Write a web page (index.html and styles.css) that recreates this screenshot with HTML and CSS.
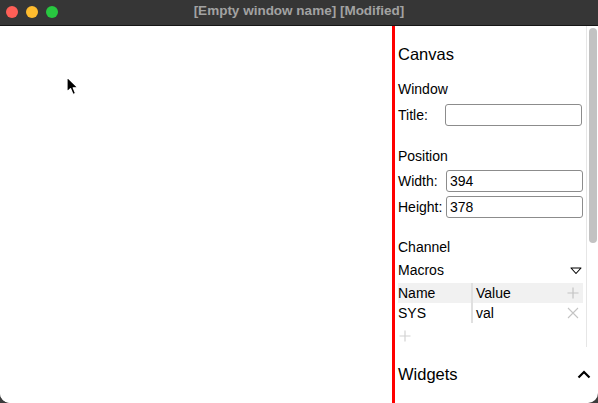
FILE: index.html
```html
<!DOCTYPE html>
<html>
<head>
<meta charset="utf-8">
<link rel="stylesheet" href="styles.css">
</head>
<body>
<div class="window">
  <div class="titlebar">
    <div class="lights">
      <span class="light red"></span>
      <span class="light yellow"></span>
      <span class="light green"></span>
    </div>
    <div class="title">[Empty window name] [Modified]</div>
  </div>
  <div class="main">
    <div class="canvas">
      <svg class="cursor" width="14" height="20" viewBox="0 0 14 20">
        <path d="M1 1 L1 16 L4.5 12.6 L7 18.5 L9.6 17.4 L7.2 11.8 L12 11.8 Z" fill="#000" stroke="#fff" stroke-width="1.2" stroke-linejoin="round"/>
      </svg>
    </div>
    <div class="panel">
      <div class="scroll">
        <div class="content">
          <div class="h-canvas">Canvas</div>
          <div class="group-label g-window">Window</div>
          <div class="form-row r-title">
            <span class="lbl lbl-title">Title:</span>
            <input class="field" type="text" value="">
          </div>
          <div class="group-label g-position">Position</div>
          <div class="form-row r-width">
            <span class="lbl lbl-pos">Width:</span>
            <input class="field" type="text" value="394">
          </div>
          <div class="form-row r-height">
            <span class="lbl lbl-pos">Height:</span>
            <input class="field" type="text" value="378">
          </div>
          <div class="group-label g-channel">Channel</div>
          <div class="macros">
            <span>Macros</span>
            <svg width="12" height="8" viewBox="0 0 12 8"><path d="M1 1 L11 1 L6 6.5 Z" fill="none" stroke="#000" stroke-width="1.1" stroke-linejoin="round"/></svg>
          </div>
          <div class="table">
            <div class="trow thead">
              <div class="cell c-name">Name</div>
              <div class="sep"></div>
              <div class="cell c-val">Value</div>
              <svg class="ico" width="12" height="12" viewBox="0 0 12 12"><path d="M6 0.5 V11.5 M0.5 6 H11.5" stroke="#c4c4c4" stroke-width="1.2"/></svg>
            </div>
            <div class="trow">
              <div class="cell c-name">SYS</div>
              <div class="sep"></div>
              <div class="cell c-val">val</div>
              <svg class="ico" width="12" height="12" viewBox="0 0 12 12"><path d="M1 1 L11 11 M11 1 L1 11" stroke="#c4c4c4" stroke-width="1.1"/></svg>
            </div>
          </div>
          <div class="addrow">
            <svg width="12" height="12" viewBox="0 0 12 12"><path d="M6 0.5 V11.5 M0.5 6 H11.5" stroke="#d2d2d2" stroke-width="1.2"/></svg>
          </div>
        </div>
        <div class="track"><div class="thumb"></div></div>
      </div>
      <div class="widgets">
        <span>Widgets</span>
        <svg width="14" height="9" viewBox="0 0 14 9"><path d="M1.5 7.5 L7 2 L12.5 7.5" fill="none" stroke="#000" stroke-width="2.2"/></svg>
      </div>
    </div>
  </div>
</div>
</body>
</html>
```
FILE: styles.css
```css
html, body {
  margin: 0;
  padding: 0;
  background: #3c3c3c;
}
body {
  width: 598px;
  height: 403px;
  overflow: hidden;
  font-family: "Liberation Sans", Arial, sans-serif;
  color: #000;
}
.window {
  width: 598px;
  height: 403px;
  border-radius: 0 0 10px 10px;
  overflow: hidden;
  background: #fff;
  display: flex;
  flex-direction: column;
}
.titlebar {
  height: 25px;
  flex: none;
  background: #363636;
  border-bottom: 1px solid #161616;
  display: flex;
  align-items: center;
  position: relative;
}
.lights {
  display: flex;
  gap: 8px;
  padding-left: 6px;
  margin-top: -1px;
}
.light {
  width: 12px;
  height: 12px;
  border-radius: 50%;
  display: block;
}
.red { background: #fe5f57; }
.yellow { background: #febc2e; }
.green { background: #28c840; }
.title {
  position: absolute;
  left: 0;
  right: 0;
  top: 3px;
  text-align: center;
  font-weight: bold;
  font-size: 13.5px;
  color: #a2a2a2;
}
.main {
  flex: 1;
  display: flex;
  min-height: 0;
}
.canvas {
  width: 392px;
  flex: none;
  border-right: 3px solid #ff0000;
  position: relative;
  background: #fff;
}
.cursor {
  position: absolute;
  left: 66px;
  top: 50px;
}
.panel {
  flex: 1;
  display: flex;
  flex-direction: column;
  min-width: 0;
}
.scroll {
  height: 321px;
  flex: none;
  display: flex;
  overflow: hidden;
}
.content {
  flex: 1;
  padding: 0 3px 0 3px;
  min-width: 0;
}
.track {
  width: 11px;
  flex: none;
  border-left: 1px solid #e6e6e6;
}
.thumb {
  margin: 2px 0 0 2px;
  width: 8px;
  height: 215px;
  border-radius: 4px;
  background: #c2c2c2;
}
.h-canvas {
  font-size: 16.5px;
  line-height: 20px;
  margin-top: 18px;
}
.group-label {
  font-size: 14px;
  line-height: 18px;
}
.g-window { margin-top: 16px; }
.g-position { margin-top: 21px; }
.g-channel { margin-top: 20px; }
.form-row {
  display: flex;
  align-items: center;
  height: 22px;
  font-size: 14px;
}
.r-title { margin-top: 6px; }
.r-width { margin-top: 5px; }
.r-height { margin-top: 4px; }
.lbl-title { width: 47px; flex: none; }
.lbl-pos { width: 48px; flex: none; }
.field {
  flex: 1;
  min-width: 0;
  height: 22px;
  box-sizing: border-box;
  border: 1px solid #8c8c8c;
  border-radius: 3px;
  padding: 0 3px;
  margin: 0;
  font-family: "Liberation Sans", Arial, sans-serif;
  font-size: 14px;
  color: #000;
  background: #fff;
  outline: none;
}
.r-title .field { margin-right: 1px; }
.macros {
  margin-top: 5px;
  height: 18px;
  font-size: 14px;
  line-height: 18px;
  display: flex;
  justify-content: space-between;
  align-items: center;
  padding-right: 1px;
}
.macros svg { margin-top: 2px; }
.table {
  margin-top: 4px;
  margin-right: 0;
  font-size: 14px;
}
.trow {
  display: flex;
  align-items: center;
  height: 20px;
}
.thead { background: #f1f1f1; }
.cell { line-height: 20px; }
.c-name { width: 73px; flex: none; }
.sep {
  width: 2px;
  height: 20px;
  background: #e0e0e0;
  flex: none;
}
.c-val { flex: 1; padding-left: 3px; }
.ico { margin-right: 4px; flex: none; }
.addrow {
  height: 18px;
  margin-top: 4px;
  padding-left: 1px;
  display: flex;
  align-items: center;
}
.widgets {
  flex: 1;
  display: flex;
  align-items: center;
  justify-content: space-between;
  padding: 0 7px 2px 3px;
  font-size: 16.5px;
}
```
